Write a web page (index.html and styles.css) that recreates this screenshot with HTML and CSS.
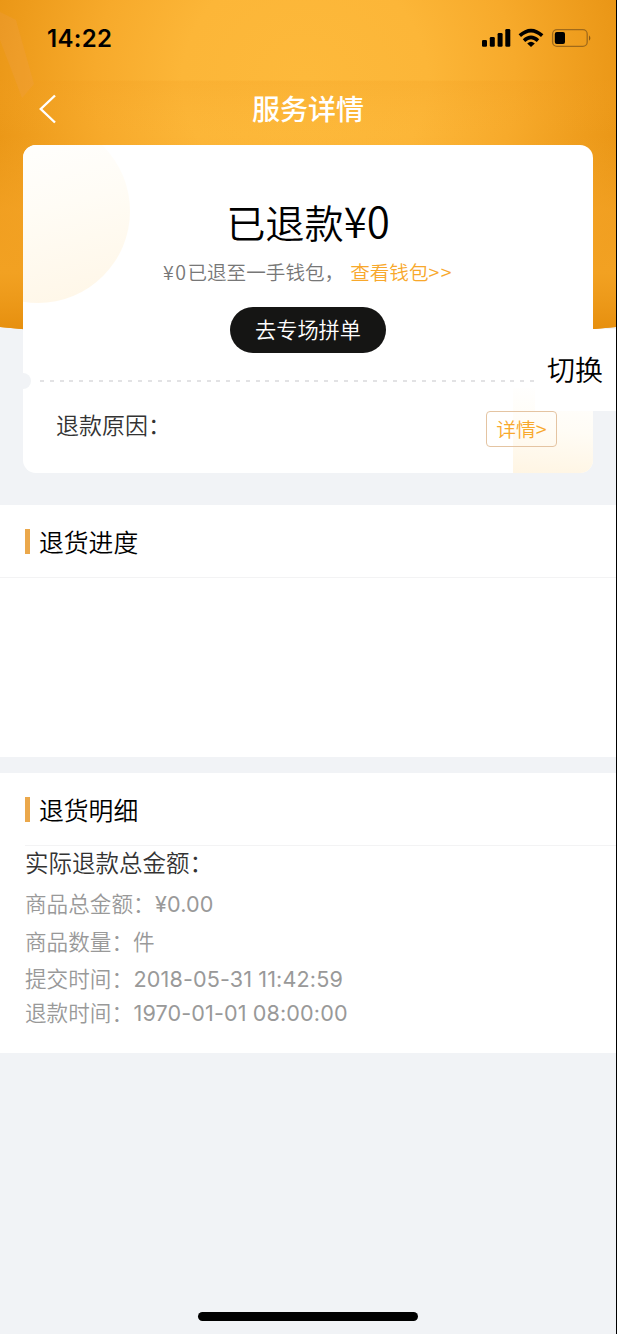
FILE: index.html
```html
<!DOCTYPE html>
<html lang="zh-CN">
<head>
<meta charset="utf-8">
<title>服务详情</title>
<link rel="stylesheet" href="styles.css">
</head>
<body>
<div class="screen">
  <svg class="backdrop" width="616" height="340" viewBox="0 0 616 340" aria-hidden="true">
    <defs>
      <radialGradient id="glow" gradientUnits="userSpaceOnUse" cx="0" cy="0" r="1" gradientTransform="translate(305 80) scale(350 330)">
        <stop offset="0" stop-color="#fdb93b"/><stop offset=".35" stop-color="#fcb638"/>
        <stop offset=".6" stop-color="#f7aa2b"/><stop offset=".82" stop-color="#ee9c1c"/>
        <stop offset="1" stop-color="#e69111"/>
      </radialGradient>
      <linearGradient id="shade" x1="0" x2="0" y1="0" y2="1">
        <stop offset=".235" stop-color="#f09a1c" stop-opacity="0"/><stop offset=".24" stop-color="#f09a1c" stop-opacity=".2"/>
        <stop offset=".4" stop-color="#f7a82c" stop-opacity="0"/><stop offset=".62" stop-color="#f7a72a" stop-opacity=".6"/>
        <stop offset=".8" stop-color="#f5a526" stop-opacity=".8"/><stop offset=".97" stop-color="#e68f0e"/>
      </linearGradient>
      <clipPath id="curve"><path d="M0 0H616V327Q308 358 0 327Z"/></clipPath>
    </defs>
    <g clip-path="url(#curve)">
      <rect width="616" height="340" fill="url(#glow)"/>
      <rect width="616" height="340" fill="url(#shade)"/>
      <path d="M0 12L16 20L34 84L22 98L0 40Z" fill="#f3a37a" opacity=".14"/>
    </g>
  </svg>

  <div class="status">
    <span class="time">14:22</span>
    <svg width="110" height="20" viewBox="482 28 110 20" aria-hidden="true">
      <g>
        <rect x="482" y="40" width="5" height="6.8" rx="1.3"/><rect x="489.8" y="37" width="5" height="9.8" rx="1.3"/>
        <rect x="497.6" y="33" width="5" height="13.8" rx="1.3"/><rect x="505.3" y="29" width="5" height="17.8" rx="1.3"/>
      </g>
      <g fill="none" stroke="#000" stroke-width="3.6">
        <path d="M519.8 35.7Q531 25.6 542.2 35.7"/><path d="M524 40.6Q531 34.2 538 40.6"/>
      </g>
      <path d="M527.2 43.4Q531 40.2 534.8 43.4L531 47Z"/>
      <rect x="552.6" y="29.6" width="34.6" height="16.8" rx="4.4" fill="none" stroke="#a06a1a" stroke-width="1.3"/>
      <rect x="554.8" y="32" width="10.2" height="12" rx="2"/>
      <path d="M589 35.2Q591.8 38 589 40.8Z" fill="#8c5a14"/>
    </svg>
  </div>

  <header class="nav">
    <svg class="back" width="18" height="30" viewBox="0 0 18 30" aria-hidden="true"><path d="M16 1.5L1.8 15L16 28.5" fill="none" stroke="#fff" stroke-width="2.4"/></svg>
    <h1>服务详情</h1>
  </header>

  <main>
    <section class="card">
      <div class="ring"></div>
      <div class="patch"></div>
      <div class="summary">
        <p class="amount">已退款<span>¥0</span></p>
        <p class="wallet"><span><b>¥0</b>已退至一手钱包，</span><a>查看钱包<b>&gt;&gt;</b></a></p>
        <button class="shop">去专场拼单</button>
      </div>
      <div class="divider"></div>
      <div class="reason"><span>退款原因：</span><a class="detail">详情&gt;</a></div>
      <i class="notch"></i>
    </section>

    <section class="panel progress">
      <h2>退货进度</h2>
    </section>

    <section class="panel breakdown">
      <h2>退货明细</h2>
      <div class="rows">
        <p class="total">实际退款总金额：</p>
        <p>商品总金额：<span>¥0.00</span></p>
        <p>商品数量：件</p>
        <p>提交时间：<span>2018-05-31 11:42:59</span></p>
        <p>退款时间：<span>1970-01-01 08:00:00</span></p>
      </div>
    </section>
  </main>

  <div class="switch">切换</div>
  <div class="home"></div>
</div>
</body>
</html>
```
FILE: styles.css
```css
* { box-sizing: border-box; }
body { margin: 0; font-family: "Noto Sans CJK SC", sans-serif; color: #000; }
h1, h2, p { margin: 0; font-weight: 350; }
.screen {
  position: relative; width: 617px; height: 1334px; overflow: hidden;
  background: #f1f3f6; border-right: 1px solid #000;
}
.backdrop { position: absolute; top: 0; left: 0; display: block; }
.status {
  position: relative; height: 81px; padding: 23px 24px 0 47px;
  display: flex; justify-content: space-between; align-items: flex-start;
}
.status svg { margin-top: 5px; }
.time { font: 600 24px/31px Inter, sans-serif; letter-spacing: .3px; }
.nav {
  position: relative; height: 64px; padding: 0 0 8px 39px;
  display: grid; grid-template-columns: 39px 1fr 78px; align-items: center;
}
.nav h1 { margin-top: -2px; color: #fff; font-size: 28px; line-height: 40px; font-weight: 500; text-align: center; }
main { position: relative; }
.card {
  position: relative; width: 570px; height: 328px; margin-left: 23px;
  background: #fff; border-radius: 13px; overflow: hidden;
}
.ring {
  position: absolute; left: -77px; top: -26px; width: 184px; height: 184px; border-radius: 50%;
  background: linear-gradient(165deg, #fff 10%, #fffcf5 50%, #fff6e6 100%);
}
.patch {
  position: absolute; left: 490px; top: 243px; width: 80px; height: 85px;
  background: linear-gradient(185deg, #fff 0%, #fffcf5 50%, #fff5e3 100%);
}
.summary { position: relative; height: 235px; padding-top: 46px; display: flex; flex-direction: column; align-items: center; }
.amount { height: 60px; font-size: 39.2px; line-height: 60px; }
.amount span { font-size: 42px; line-height: 1; }
.wallet { display: flex; gap: 6px; margin-top: 5px; color: #777; font-size: 19.6px; line-height: 32px; }
.wallet b { font-weight: inherit; letter-spacing: 1.4px; }
.wallet a { color: #f8a82c; }
.shop {
  margin: 19px 0 0; padding: 0 0 2px; width: 156px; height: 46px; border: 0; border-radius: 23px;
  background: #151514; color: #fff; font: 350 21.2px/44px "Noto Sans CJK SC", sans-serif;
}
.divider {
  position: relative; height: 2px; margin: 0 17px;
  background: repeating-linear-gradient(90deg, #e2e2e4 0 4px, transparent 4px 9.8px);
}
.reason {
  position: relative; padding: 25px 36px 0 33px; display: flex; justify-content: space-between;
  font-size: 23px; line-height: 34px; color: #333; font-weight: 350;
}
.detail {
  width: 71px; height: 36px; margin-top: 4px; border: 1px solid #e4c4a2; border-radius: 4px;
  color: #f8a82c; font-size: 19.8px; line-height: 33px; text-align: center;
}
.notch { position: absolute; left: -8px; top: 228px; width: 16px; height: 16px; border-radius: 50%; background: #f1f3f6; }
.panel { background: #fff; }
.panel h2 {
  height: 73px; padding: 0 0 1px 25px; border-bottom: 1px solid #f3f3f4;
  display: flex; align-items: center; gap: 9px; font-size: 24.8px; line-height: 34px;
}
.panel h2::before { content: ""; width: 5px; height: 25px; margin-top: 1px; background: #eba84b; }
.progress { height: 252px; margin-top: 32px; }
.breakdown { height: 280px; margin-top: 16px; }
.breakdown h2 { padding-left: 0; margin-left: 25px; }
.rows { padding-left: 25px; margin-top: -1px; font-size: 21.6px; color: #999; }
.rows p { line-height: 34px; height: 34px; }
.rows p:nth-child(2) { margin-top: 7px; }
.rows p:nth-child(3) { margin-top: 4px; }
.rows p:nth-child(4) { margin-top: 3px; }
.rows span { font-family: Inter, sans-serif; font-weight: 400; letter-spacing: .12px; margin-left: .5px; }
.rows .total { font-size: 23.5px; color: #333; }
.switch {
  position: absolute; left: 535px; top: 329px; width: 81px; height: 82px; padding-right: 1px;
  background: #fff; font-size: 28px; font-weight: 350; line-height: 80px; text-align: center;
}
.home { position: absolute; left: 198px; top: 1312px; width: 220px; height: 9px; border-radius: 5px; background: #000; }
```
